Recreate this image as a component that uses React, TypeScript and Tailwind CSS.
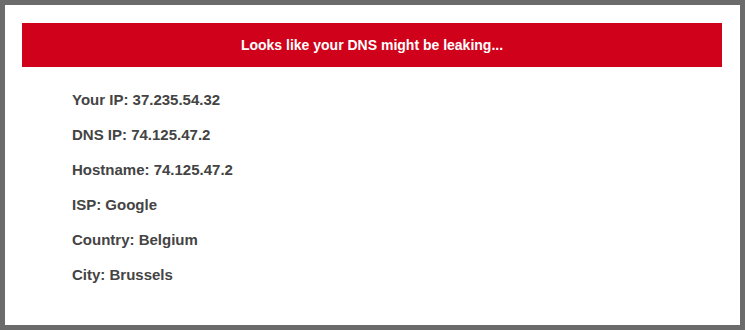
export default function App() {
  const rows = [
    "Your IP: 37.235.54.32",
    "DNS IP: 74.125.47.2",
    "Hostname: 74.125.47.2",
    "ISP: Google",
    "Country: Belgium",
    "City: Brussels",
  ];
  return (
    <div className="w-[745px] h-[330px] bg-[#6b6b6b] p-[5px] box-border" style={{ fontFamily: '"Liberation Sans", Arial, sans-serif' }}>
      <div className="w-full h-full bg-white flex flex-col">
        <div className="ml-[17px] mr-[18px] mt-[18px] h-[44px] bg-[#d0021b] flex items-center justify-center text-white font-bold text-[14px]">
          Looks like your DNS might be leaking...
        </div>
        <div className="pl-[67px] pt-[15px] flex flex-col">
          {rows.map((r) => (
            <div key={r} className="h-[35px] leading-[35px] text-[15px] font-bold text-[#444444]">
              {r}
            </div>
          ))}
        </div>
      </div>
    </div>
  );
}
